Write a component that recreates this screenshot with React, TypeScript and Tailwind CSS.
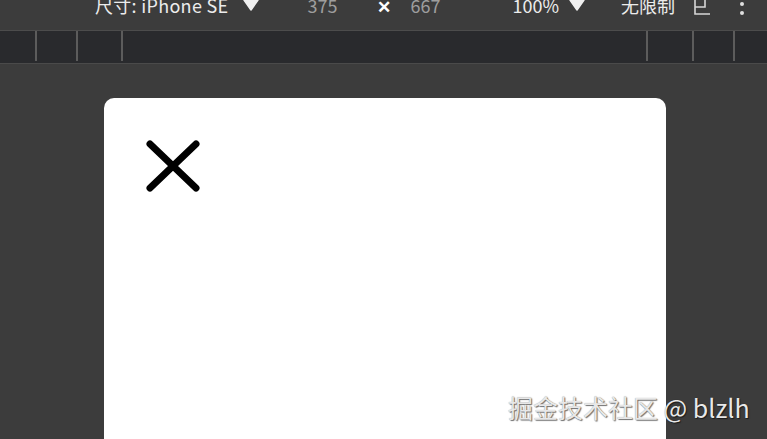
import React from "react";

const Tri = () => (
  <svg width="16" height="12" viewBox="0 0 16 12" className="block">
    <path d="M1 1 H15 L8 11 Z" fill="#f0f0f0" stroke="#f0f0f0" strokeWidth="1.5" strokeLinejoin="round" />
  </svg>
);

export default function App() {
  const font = { fontFamily: '"Noto Sans CJK SC", "Noto Sans", sans-serif' };
  return (
    <div className="relative w-[767px] h-[439px] overflow-hidden bg-[#3c3c3c]" style={font}>
      {/* top toolbar */}
      <div className="h-[31px] bg-[#3c3c3c] border-b border-[#4c4c4c] overflow-hidden">
        <div className="flex items-center h-[26px] -mt-[8px] text-[18px] leading-none text-[#ececec]">
          <span className="ml-[95px] tracking-[0.3px]">尺寸: iPhone SE</span>
          <span className="ml-[15px]"><Tri /></span>
          <span className="ml-[48px] text-[#9e9e9e]">375</span>
          <span className="ml-[40px] text-[17px] font-bold text-white">✕</span>
          <span className="ml-[19px] text-[#9e9e9e]">667</span>
          <span className="ml-[72px]">100%</span>
          <span className="ml-[10px]"><Tri /></span>
          <span className="ml-[36px]">无限制</span>
          <span className="ml-[18px]">
            <svg width="18" height="26" viewBox="0 0 18 26" className="block">
              <path d="M16 4 H2 V22 H17 M2 15 H12 V4" fill="none" stroke="#d6d6d6" strokeWidth="1.6" />
            </svg>
          </span>
          <span className="ml-[28px]">
            <svg width="6" height="26" viewBox="0 0 6 26" className="block">
              <circle cx="3" cy="3" r="2" fill="#e0e0e0" />
              <circle cx="3" cy="12" r="2" fill="#e0e0e0" />
              <circle cx="3" cy="21" r="2" fill="#e0e0e0" />
            </svg>
          </span>
        </div>
      </div>
      {/* ruler bar */}
      <div className="h-[33px] bg-[#292a2d] border-b border-[#4a4a4a] flex items-start">
        <div className="ml-[35px] w-[2px] h-[30px] bg-[#5c5c5c]" />
        <div className="ml-[39px] w-[2px] h-[30px] bg-[#5c5c5c]" />
        <div className="ml-[43px] w-[2px] h-[30px] bg-[#5c5c5c]" />
        <div className="flex-1" />
        <div className="w-[2px] h-[30px] bg-[#5c5c5c]" />
        <div className="ml-[44px] w-[2px] h-[30px] bg-[#5c5c5c]" />
        <div className="ml-[39px] w-[2px] h-[30px] bg-[#5c5c5c]" />
        <div className="w-[32px]" />
      </div>
      {/* canvas */}
      <div className="pt-[34px] pl-[104px]">
        <div className="w-[562px] h-[360px] bg-white rounded-t-[10px] pt-[41px] pl-[41px]">
          <svg width="56" height="54" viewBox="0 0 56 54" className="block">
            <path d="M5 5 L51 49 M51 5 L5 49" stroke="#000" strokeWidth="7" strokeLinecap="round" />
          </svg>
        </div>
      </div>
      {/* watermark */}
      <div
        className="absolute left-[508px] top-[395px] text-[25px] leading-none whitespace-nowrap text-[#e8e8e8]"
        style={{ textShadow: "1px 1px 1px rgba(0,0,0,0.55), 0 0 1px rgba(0,0,0,0.4)" }}
      >
        掘金技术社区 @ blzlh
      </div>
    </div>
  );
}
